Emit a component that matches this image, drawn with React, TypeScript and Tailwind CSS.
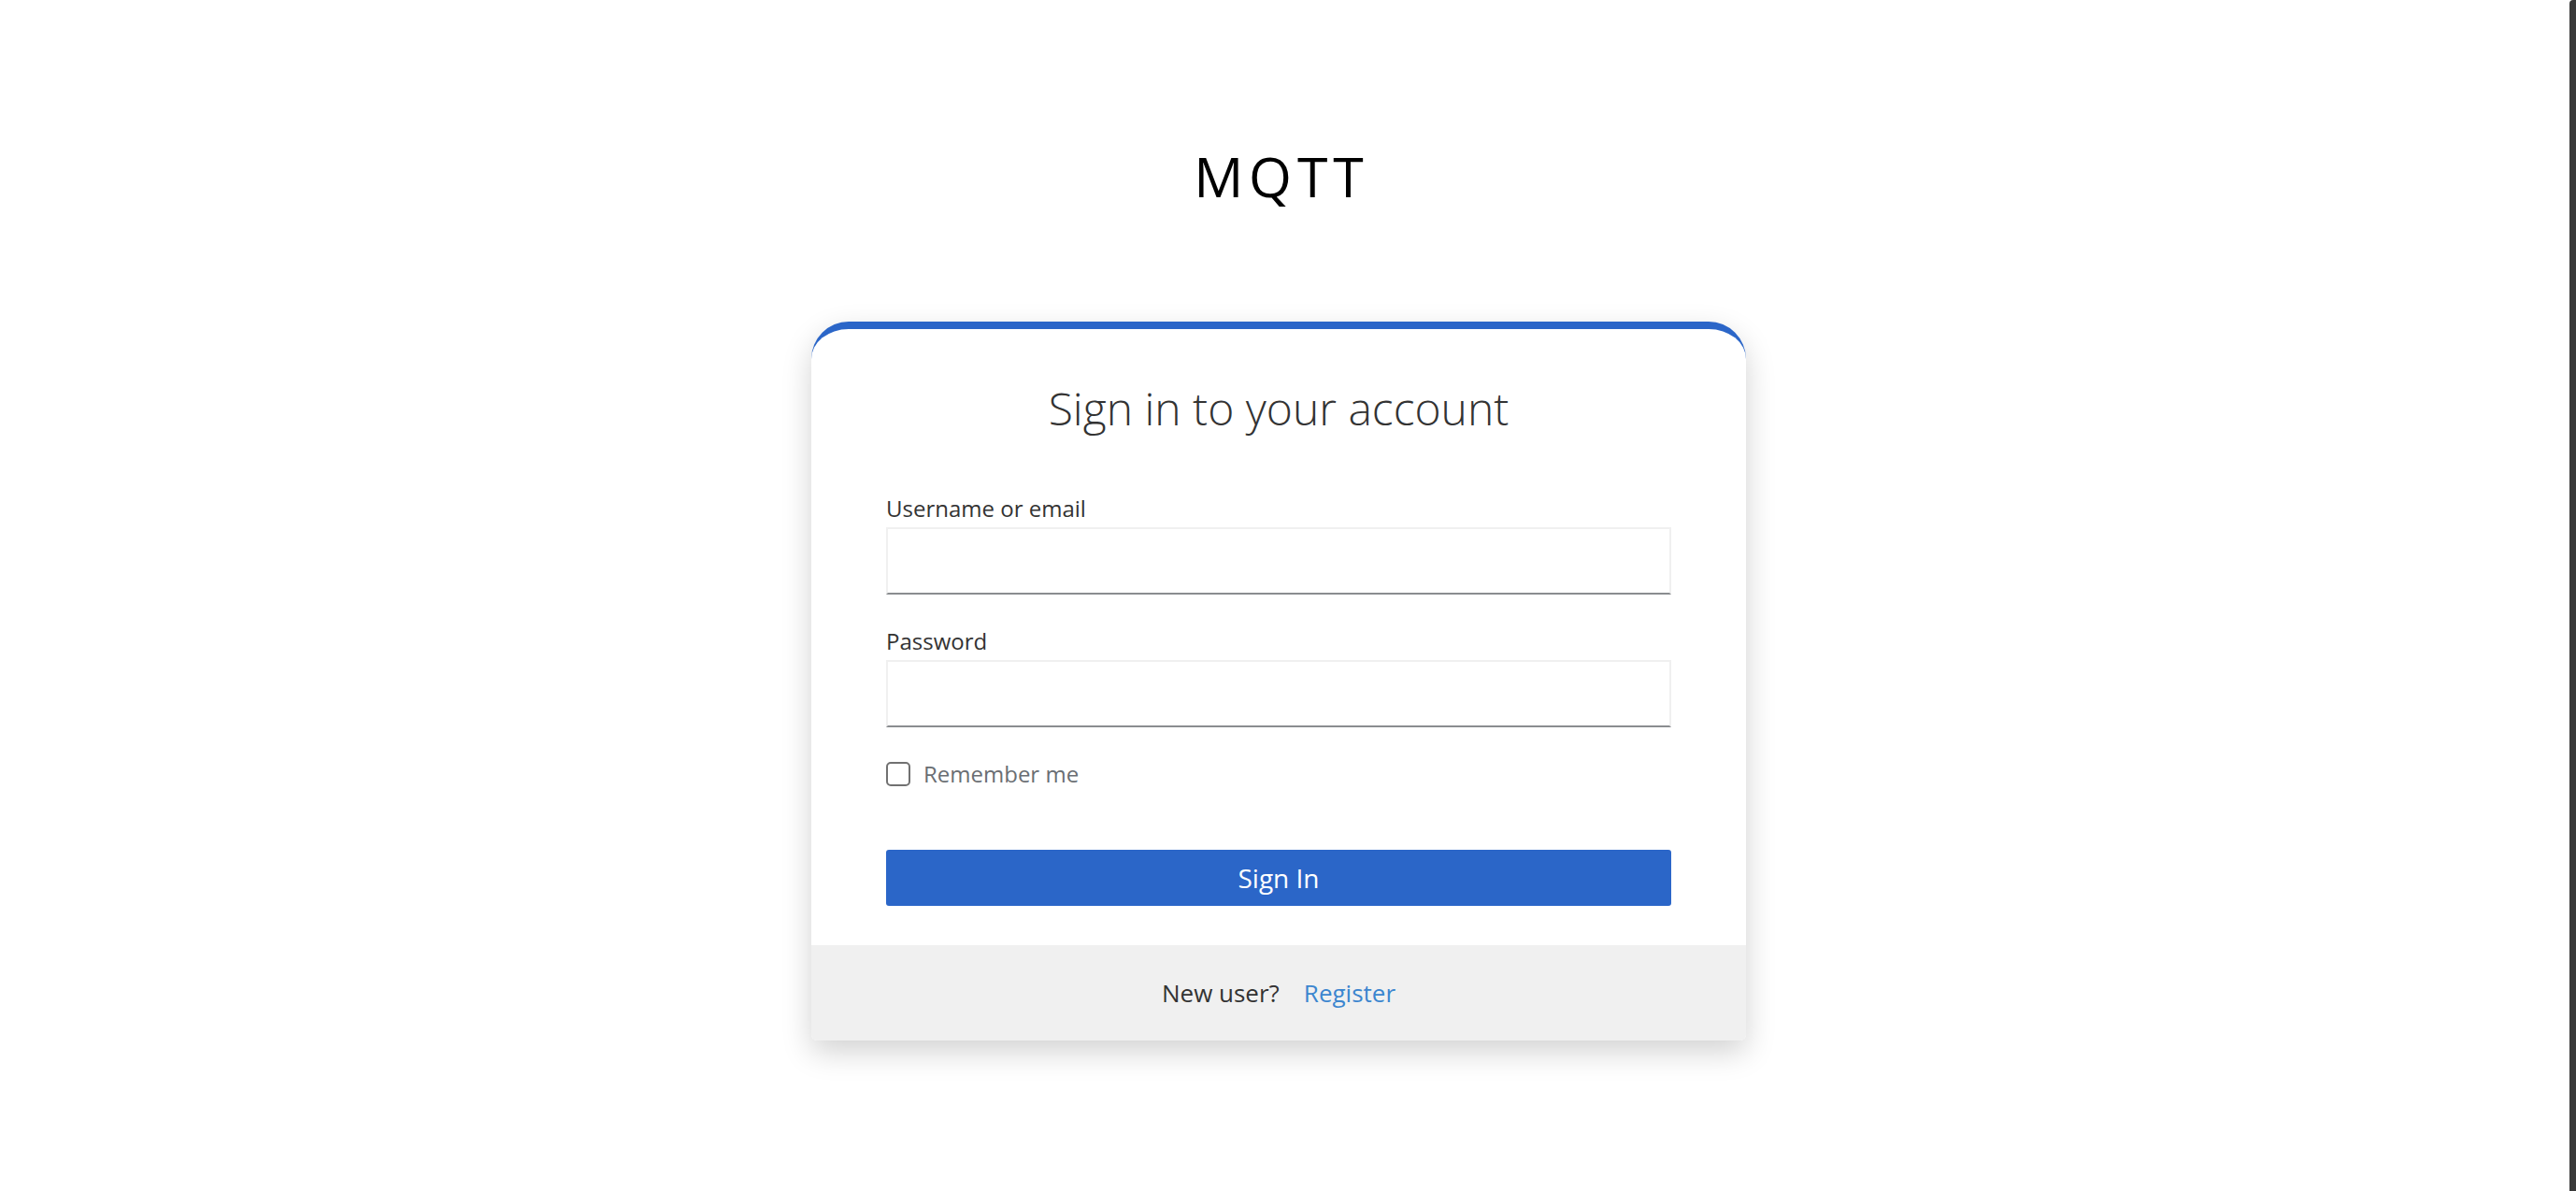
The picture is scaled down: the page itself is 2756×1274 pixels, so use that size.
import React from "react";

export default function App() {
  return (
    <div
      className="flex min-h-[1274px] w-full bg-white"
      style={{ fontFamily: '"Open Sans", "Noto Sans", sans-serif' }}
    >
      <main className="flex w-[2736px] shrink-0 flex-col items-center pt-[153px]">
        <div className="pl-[5.9px] text-[59px] leading-[70px] tracking-[0.1em] text-black">
          MQTT
        </div>

        <div className="mt-[121px] w-[1000px] overflow-hidden rounded-t-[40px] rounded-b-[6px] border-t-[8px] border-[#2b66c8] bg-white shadow-[0_12px_32px_rgba(0,0,0,0.18)]">
          <div className="px-[80px] pt-[55px] pb-[42px]">
            <h1 className="text-center text-[48px] font-light leading-[60px] text-[#333333]">
              Sign in to your account
            </h1>

            <div className="mt-[61px]">
              <label className="mb-[4px] block text-[24px] leading-[32px] text-[#333333]">
                Username or email
              </label>
              <input
                type="text"
                className="block h-[72px] w-full border-[2px] border-[#f0f0f0] border-b-[#8a8d90] bg-white outline-none"
              />
            </div>

            <div className="mt-[34px]">
              <label className="mb-[4px] block text-[24px] leading-[32px] text-[#333333]">
                Password
              </label>
              <input
                type="password"
                className="block h-[72px] w-full border-[2px] border-[#f0f0f0] border-b-[#8a8d90] bg-white outline-none"
              />
            </div>

            <div className="mt-[34px] flex items-center">
              <span className="box-border block h-[26px] w-[26px] rounded-[5px] border-[2px] border-[#717171] bg-white" />
              <span className="ml-[14px] text-[24px] leading-[32px] text-[#6a6e73]">
                Remember me
              </span>
            </div>

            <button className="mt-[65px] flex h-[60px] w-full items-center justify-center rounded-[3px] bg-[#2b66c8] text-[28px] leading-[36px] text-white">
              Sign In
            </button>
          </div>

          <div className="flex h-[102px] items-center justify-center gap-[26px] bg-[#f0f0f0] text-[26px] leading-[36px]">
            <span className="text-[#333333]">New user?</span>
            <a className="text-[#3c86cf]">Register</a>
          </div>
        </div>
      </main>
      <div className="flex-1" />
      <div className="w-[7px] shrink-0 rounded-tl-[4px] bg-[#3a3a3a]" />
    </div>
  );
}
